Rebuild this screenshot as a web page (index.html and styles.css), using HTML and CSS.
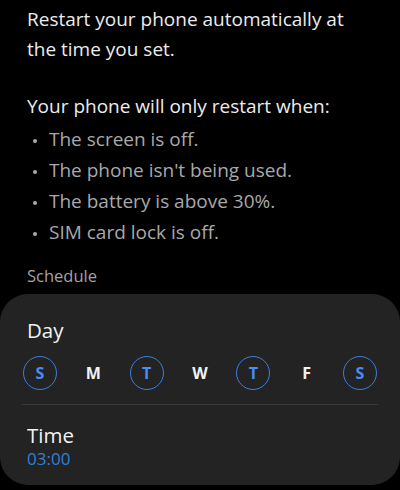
FILE: index.html
```html
<!DOCTYPE html>
<html lang="en">
<head>
    <meta charset="UTF-8">
    <title>Auto restart</title>
    <link rel="stylesheet" href="styles.css">
</head>
<body>
    <div class="intro">
        <p class="lead">Restart your phone automatically at the time you set.</p>
        <p class="lead cond">Your phone will only restart when:</p>
        <ul class="rules">
            <li>The screen is off.</li>
            <li>The phone isn't being used.</li>
            <li>The battery is above 30%.</li>
            <li>SIM card lock is off.</li>
        </ul>
        <div class="section-title">Schedule</div>
    </div>

    <div class="card">
        <div class="card-label">Day</div>
        <div class="days">
            <span class="day on">S</span>
            <span class="day">M</span>
            <span class="day on">T</span>
            <span class="day">W</span>
            <span class="day on">T</span>
            <span class="day">F</span>
            <span class="day on">S</span>
        </div>
        <div class="divider"></div>
        <div class="card-label time-label">Time</div>
        <div class="time-value">03:00</div>
    </div>
</body>
</html>
```

FILE: styles.css
```css
body {
    margin: 0;
    background: #000;
    font-family: "Open Sans", Roboto, sans-serif;
    color: #ececec;
}
.intro {
    padding: 4px 40px 0 27px;
}
.lead {
    margin: 0;
    font-size: 19px;
    line-height: 30px;
}
.cond {
    margin-top: 27px;
}
.rules {
    list-style: none;
    margin: 3px 0 0 0;
    padding: 0;
}
.rules li {
    position: relative;
    padding-left: 22px;
    font-size: 19px;
    line-height: 31px;
    color: #a9a9a9;
}
.rules li::before {
    content: "";
    position: absolute;
    left: 6px;
    top: 15px;
    width: 4px;
    height: 4px;
    border-radius: 50%;
    background: #a9a9a9;
}
.section-title {
    margin-top: 18px;
    font-size: 16.5px;
    font-weight: 500;
    line-height: 20px;
    color: #a3a3a3;
}
.card {
    margin-top: 8px;
    background: #232323;
    border-radius: 28px;
    padding: 22px 0 15px 0;
}
.card-label {
    padding: 0 27px;
    font-size: 20.5px;
    line-height: 28px;
    color: #f2f2f2;
}
.time-label {
    line-height: 26px;
}
.days {
    display: flex;
    justify-content: space-between;
    padding: 0 23px;
    margin-top: 12px;
}
.day {
    width: 34px;
    height: 34px;
    box-sizing: border-box;
    display: flex;
    align-items: center;
    justify-content: center;
    font-size: 16px;
    font-weight: 700;
    color: #f2f2f2;
}
.day.on {
    border: 1.5px solid #3b7fe0;
    border-radius: 50%;
    color: #4a8df0;
}
.divider {
    height: 1px;
    background: #3a3a3a;
    margin: 14px 22px 17px 22px;
}
.time-value {
    padding: 0 27px;
    font-size: 17px;
    line-height: 22px;
    color: #2f80dc;
}
```
